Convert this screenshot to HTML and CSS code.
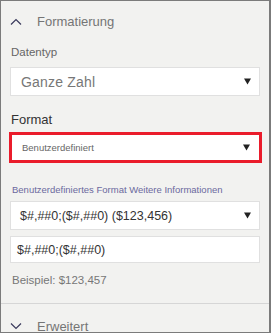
FILE: index.html
```html
<!DOCTYPE html>
<html lang="de">
<head>
    <meta charset="UTF-8">
    <meta name="viewport" content="width=device-width, initial-scale=1.0">
    <title>Formatierung</title>
    <link rel="stylesheet" href="styles.css">
</head>
<body>

    <div class="panel">
        <div class="section-head">
            <svg class="chevron" width="12" height="7" viewBox="0 0 12 7"><path d="M1 6.5 L6 1.5 L11 6.5" fill="none" stroke="#3a3a5c" stroke-width="1.2"/></svg>
            <span>Formatierung</span>
        </div>

        <div class="field">
            <div class="label">Datentyp</div>
            <div class="select select-large">
                <span>Ganze Zahl</span>
                <svg class="arrow" width="7" height="7" viewBox="0 0 7 7"><path d="M0 0.5 H7 L3.5 6.5 Z" fill="#222"/></svg>
            </div>
        </div>

        <div class="field">
            <div class="label label-dark">Format</div>
            <div class="select select-small highlight">
                <span>Benutzerdefiniert</span>
                <svg class="arrow" width="7" height="7" viewBox="0 0 7 7"><path d="M0 0.5 H7 L3.5 6.5 Z" fill="#222"/></svg>
            </div>
        </div>

        <div class="field custom">
            <div class="link">Benutzerdefiniertes Format Weitere Informationen</div>
            <div class="select select-code">
                <span>$#,##0;($#,##0) ($123,456)</span>
                <svg class="arrow" width="7" height="7" viewBox="0 0 7 7"><path d="M0 0.5 H7 L3.5 6.5 Z" fill="#222"/></svg>
            </div>
            <div class="input">$#,##0;($#,##0)</div>
            <div class="example">Beispiel: $123,457</div>
        </div>

        <div class="divider"></div>

        <div class="section-head collapsed">
            <svg class="chevron" width="12" height="7" viewBox="0 0 12 7"><path d="M1 0.5 L6 5.5 L11 0.5" fill="none" stroke="#3a3a5c" stroke-width="1.2"/></svg>
            <span>Erweitert</span>
        </div>
    </div>

</body>
</html>
```

FILE: styles.css
```css
body {
    margin: 0;
    padding: 0;
    font-family: 'Liberation Sans', Arial, sans-serif;
    background-color: #f2f2f0;
}

.panel {
    width: 268px;
    height: 331px;
    border: 1px solid #7b7b7b;
    border-right-width: 2px;
    background-color: #f2f2f0;
    overflow: hidden;
}

.section-head {
    display: flex;
    align-items: center;
    height: 20px;
    margin-top: 10px;
    padding-left: 9px;
    font-size: 13px;
    color: #757575;
}

.section-head .chevron {
    width: 12px;
    margin-right: 15px;
}

.field {
    padding: 0 9px;
}

.label {
    margin-top: 14px;
    font-size: 11.5px;
    line-height: 14px;
    color: #666;
    padding-left: 1px;
}

.label-dark {
    margin-top: 16px;
    font-size: 13px;
    line-height: 16px;
    color: #333;
}

.select,
.input {
    display: flex;
    align-items: center;
    justify-content: space-between;
    background-color: #fff;
    border: 1px solid #e0e0e0;
    box-sizing: border-box;
}

.select-large {
    margin-top: 8px;
    height: 29px;
    padding: 0 8px 0 10px;
    font-size: 14px;
    letter-spacing: 0.2px;
    color: #777;
}

.select-small {
    margin-top: 4px;
    height: 31px;
    padding: 0 9px 0 10px;
    font-size: 9.5px;
    color: #666;
}

.highlight {
    margin-left: -1px;
    margin-right: -2px;
    border: 3px solid #ea1c2b;
}

.custom .link {
    margin-top: 21px;
    font-size: 9.5px;
    line-height: 12px;
    color: #6b699e;
    padding-left: 2px;
}

.select-code {
    margin-top: 5px;
    height: 29px;
    padding: 0 8px 0 9px;
    font-size: 12.5px;
    color: #333;
}

.input {
    margin-top: 6px;
    height: 27px;
    padding: 0 6px;
    font-size: 12.5px;
    color: #333;
}

.example {
    margin-top: 10px;
    font-size: 11.5px;
    line-height: 14px;
    color: #777;
    padding-left: 2px;
}

.divider {
    margin-top: 16px;
    height: 1px;
    background-color: #d6d6d6;
}

.collapsed {
    margin-top: 12px;
}
```
